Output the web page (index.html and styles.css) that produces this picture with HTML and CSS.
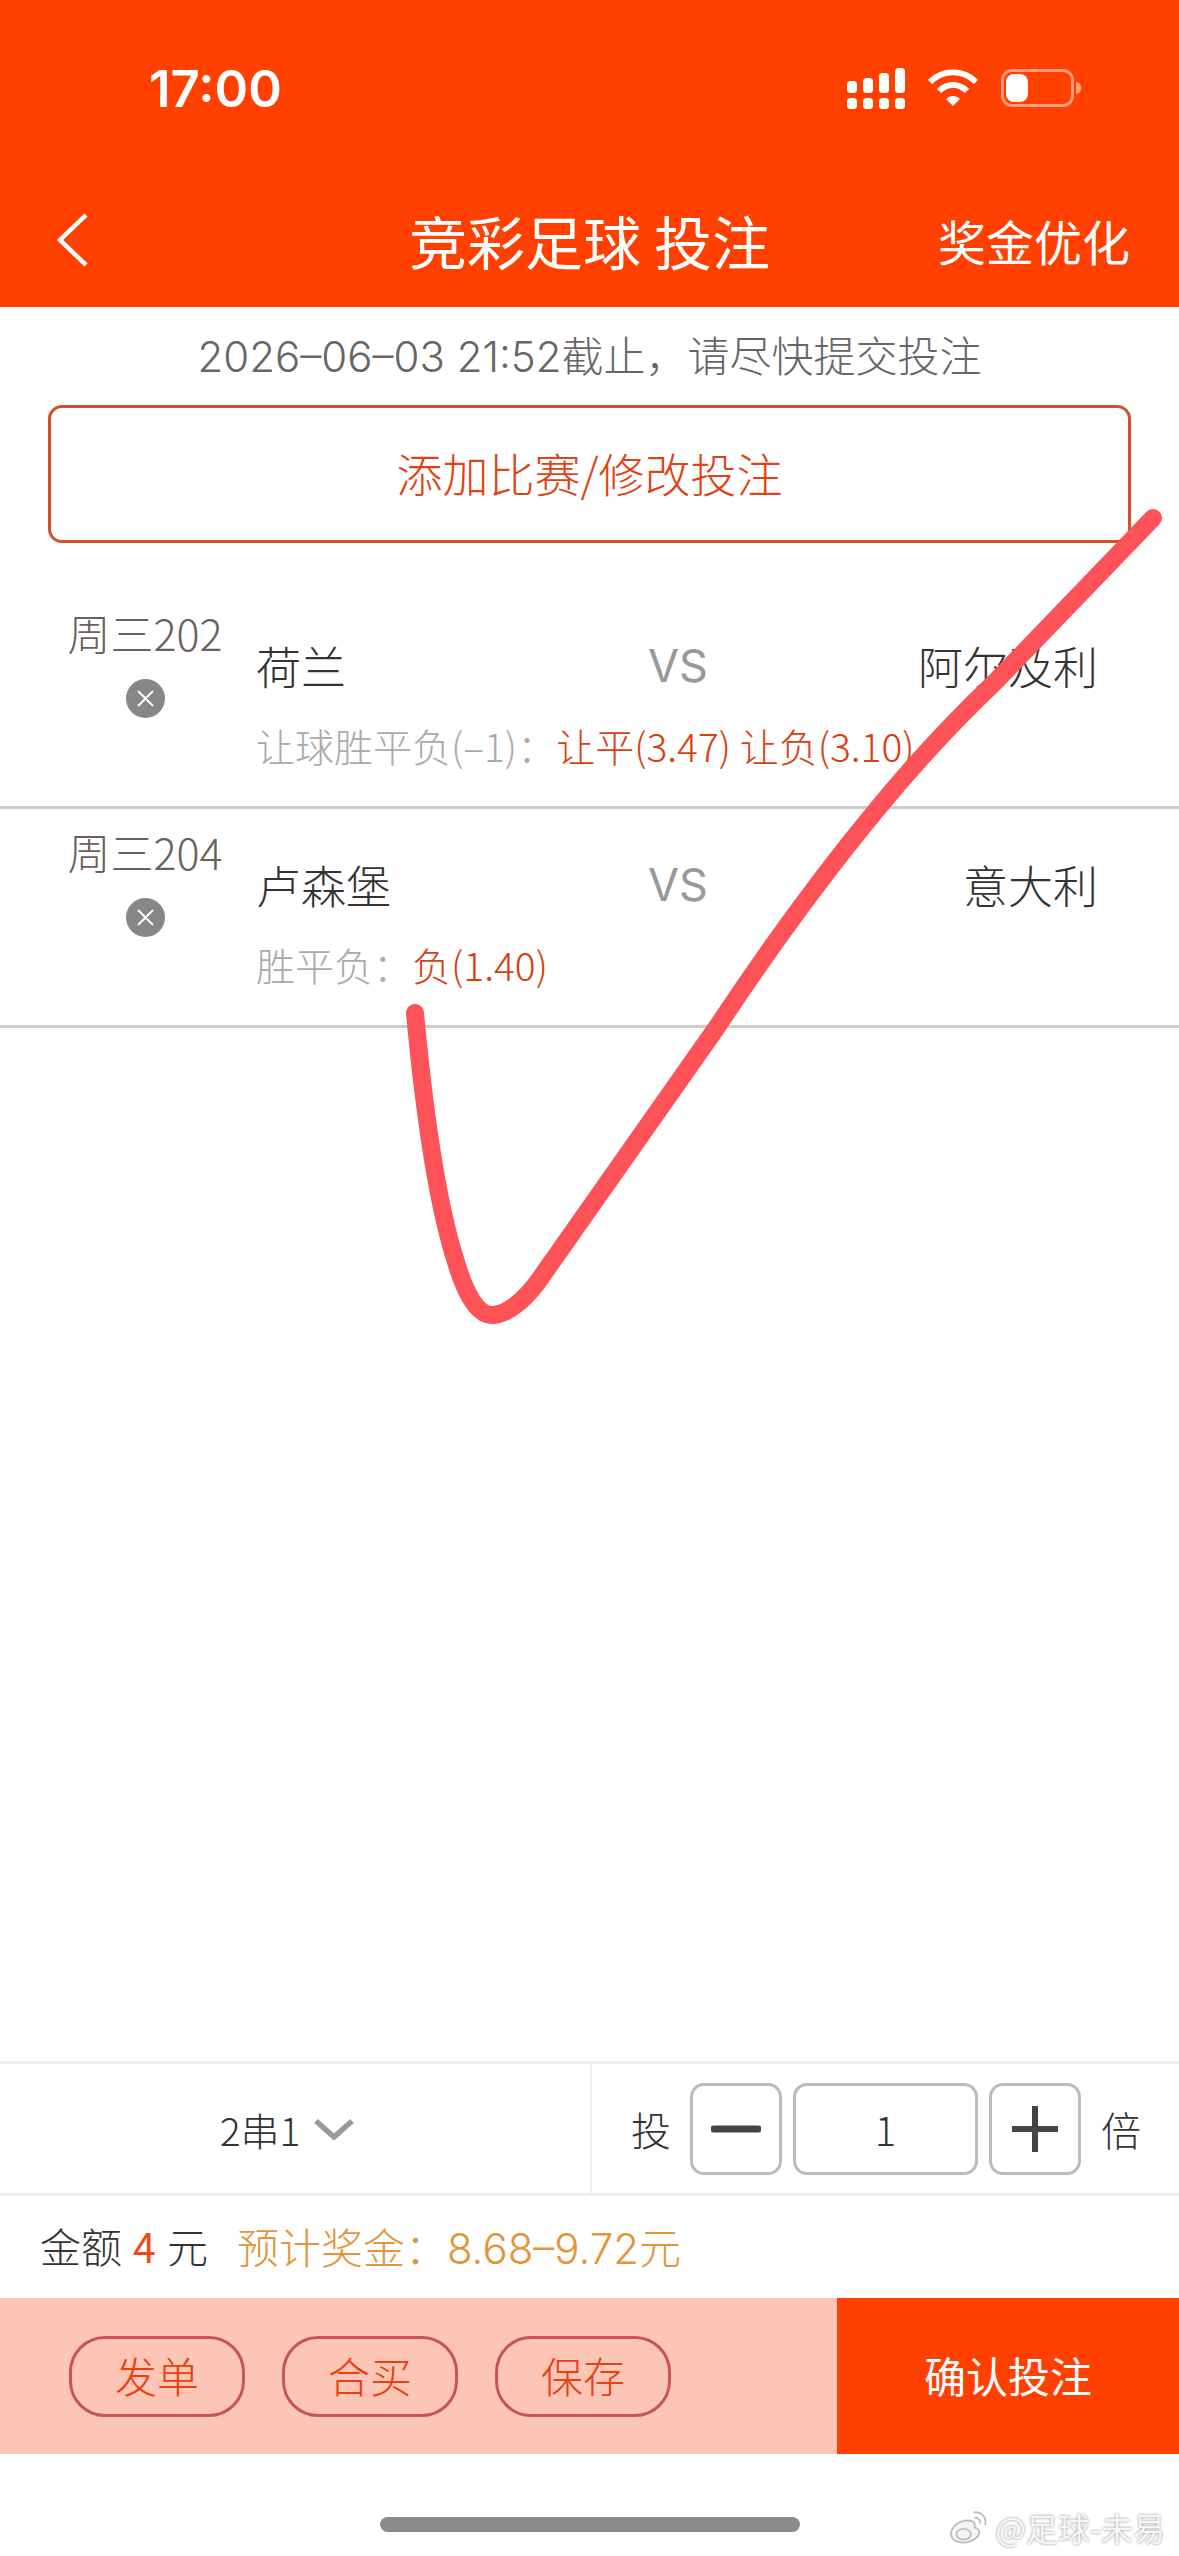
FILE: index.html
```html
<!DOCTYPE html>
<html lang="zh-CN">
<head>
    <meta charset="UTF-8">
    <meta name="viewport" content="width=device-width, initial-scale=1.0">
    <title>竞彩足球 投注</title>
    <link rel="stylesheet" href="styles.css">
</head>
<body>
    <div class="page">
        <!-- Header -->
        <header class="header">
            <div class="status-bar">
                <span class="time">17:00</span>
                <div class="status-icons">
                    <svg width="58" height="41" viewBox="0 0 58 41" fill="#fff">
                        <rect x="0" y="13" width="10" height="12" rx="3.5"/>
                        <rect x="16" y="10" width="10" height="15" rx="3.5"/>
                        <rect x="32" y="5" width="10" height="20" rx="3.5"/>
                        <rect x="48" y="0" width="10" height="25" rx="3.5"/>
                        <rect x="0" y="30" width="10" height="11" rx="3.5"/>
                        <rect x="16" y="30" width="10" height="11" rx="3.5"/>
                        <rect x="32" y="30" width="10" height="11" rx="3.5"/>
                        <rect x="48" y="30" width="10" height="11" rx="3.5"/>
                    </svg>
                    <svg class="wifi" width="50" height="38" viewBox="0 0 50 38" fill="none" stroke="#fff" stroke-width="6">
                        <path d="M2 13 C15 0 35 0 48 13"/>
                        <path d="M11 22 C19 14 31 14 39 22"/>
                        <path d="M18 30 L25 37 L32 30 C28 26 22 26 18 30 Z" fill="#fff" stroke="none"/>
                    </svg>
                    <div class="battery">
                        <div class="battery-level"></div>
                    </div>
                    <div class="battery-cap"></div>
                </div>
            </div>
            <div class="nav-bar">
                <svg class="back" width="34" height="54" viewBox="0 0 34 54" fill="none" stroke="#fff" stroke-width="4.5">
                    <path d="M30 2 L4 27 L30 52"/>
                </svg>
                <h1 class="nav-title">竞彩足球 投注</h1>
                <span class="nav-action">奖金优化</span>
            </div>
        </header>

        <div class="deadline">2026–06–03 21:52截止，请尽快提交投注</div>
        <div class="add-match">添加比赛/修改投注</div>

        <!-- Selected matches -->
        <section class="matches">
            <div class="match">
                <div class="match-no">
                    <span>周三202</span>
                    <svg class="remove" width="39" height="39" viewBox="0 0 39 39">
                        <circle cx="19.5" cy="19.5" r="19.5" fill="#878787"/>
                        <path d="M12 12 L27 27 M27 12 L12 27" stroke="#fff" stroke-width="2"/>
                    </svg>
                </div>
                <div class="match-info">
                    <div class="teams">
                        <span class="team">荷兰</span>
                        <span class="vs">VS</span>
                        <span class="team team-away">阿尔及利</span>
                    </div>
                    <div class="pick">
                        <span class="pick-label">让球胜平负(–1)：</span><span class="pick-odds">让平(3.47) 让负(3.10)</span>
                    </div>
                </div>
            </div>
            <div class="match">
                <div class="match-no">
                    <span>周三204</span>
                    <svg class="remove" width="39" height="39" viewBox="0 0 39 39">
                        <circle cx="19.5" cy="19.5" r="19.5" fill="#878787"/>
                        <path d="M12 12 L27 27 M27 12 L12 27" stroke="#fff" stroke-width="2"/>
                    </svg>
                </div>
                <div class="match-info">
                    <div class="teams">
                        <span class="team">卢森堡</span>
                        <span class="vs">VS</span>
                        <span class="team team-away">意大利</span>
                    </div>
                    <div class="pick">
                        <span class="pick-label">胜平负：</span><span class="pick-odds">负(1.40)</span>
                    </div>
                </div>
            </div>
        </section>

        <!-- Bottom controls -->
        <footer class="footer">
            <div class="bet-row">
                <div class="parlay">
                    <span>2串1</span>
                    <svg width="40" height="22" viewBox="0 0 40 22" fill="none" stroke="#999" stroke-width="5.5">
                        <path d="M2 3 L20 19 L38 3"/>
                    </svg>
                </div>
                <div class="multiple">
                    <span>投</span>
                    <div class="step">
                        <svg width="50" height="50" viewBox="0 0 50 50"><path d="M3 25 H47" stroke="#444" stroke-width="7" stroke-linecap="round"/></svg>
                    </div>
                    <div class="step step-value">1</div>
                    <div class="step">
                        <svg width="46" height="46" viewBox="0 0 46 46"><path d="M1 23 H45 M23 1 V45" stroke="#444" stroke-width="6" stroke-linecap="round"/></svg>
                    </div>
                    <span>倍</span>
                </div>
            </div>
            <div class="amount-row">
                <span class="amount-total">金额 <em class="amount">4</em> 元</span>
                <span class="bonus">预计奖金：8.68–9.72元</span>
            </div>
            <div class="action-bar">
                <div class="pills">
                    <span class="pill">发单</span>
                    <span class="pill">合买</span>
                    <span class="pill">保存</span>
                </div>
                <div class="confirm">确认投注</div>
            </div>
            <div class="home-area">
                <div class="home-indicator"></div>
            </div>
        </footer>

        <!-- Hand-drawn tick on top of the page -->
        <svg class="tick" width="1179" height="2556" viewBox="0 0 1179 2556" fill="none">
            <path d="M415 1013 C424 1110 436 1200 456 1262 C466 1296 478 1315 492 1315 C507 1315 524 1300 537 1283 C597 1198 657 1112 717 1027 C770 947 820 878 878 808 C915 763 955 720 997 680 C1045 630 1105 568 1153 518" stroke="#fd5358" stroke-width="18" stroke-linecap="round" stroke-linejoin="round"/>
        </svg>

        <!-- Watermark -->
        <div class="watermark">
            <svg width="42" height="36" viewBox="0 0 46 40" fill="#f4f4f4" stroke="#bdbdbd" stroke-width="2">
                <path d="M18 13 C8 15 2 23 3 29 C5 37 16 39 24 36 C32 33 36 28 34 24 C33 21 30 21 29 20 C31 15 27 12 18 13 Z"/>
                <ellipse cx="17" cy="28" rx="8" ry="6"/>
                <path d="M28 4 C36 2 43 9 41 18 M29 10 C33 9 36 12 35 16" fill="none"/>
            </svg>
            <span>@足球-未易</span>
        </div>
    </div>
</body>
</html>
```

FILE: styles.css
```css
* {
    box-sizing: border-box;
}

body {
    margin: 0;
    padding: 0;
    background-color: #fff;
    font-family: "Noto Sans CJK SC", "Noto Sans", sans-serif;
}

.page {
    position: relative;
    width: 1179px;
    height: 2556px;
    display: flex;
    flex-direction: column;
    overflow: hidden;
    background-color: #fff;
}

/* header */
.header {
    height: 307px;
    background-color: #ff4000;
    color: #fff;
    flex-shrink: 0;
}

.status-bar {
    height: 176px;
    padding: 0 98px 0 149px;
    display: flex;
    justify-content: space-between;
    align-items: center;
}

.time {
    font-family: Inter, sans-serif;
    font-size: 51px;
    font-weight: 600;
}

.status-icons {
    display: flex;
    align-items: center;
}

.wifi {
    margin-left: 23px;
}

.battery {
    width: 73px;
    height: 38px;
    margin-left: 23px;
    padding: 2px;
    border: 3px solid #ff9c7c;
    border-radius: 11px;
}

.battery-level {
    width: 22px;
    height: 28px;
    background-color: #fff;
    border-radius: 8px;
}

.battery-cap {
    width: 5px;
    height: 12px;
    margin-left: 2px;
    background-color: #ff9c7c;
    border-radius: 0 5px 5px 0;
}

.nav-bar {
    height: 131px;
    position: relative;
    padding: 0 49px 4px 56px;
    display: flex;
    align-items: center;
    justify-content: space-between;
}

.nav-title {
    position: absolute;
    left: 0;
    right: 0;
    margin: 0;
    text-align: center;
    font-size: 58px;
    font-weight: 400;
}

.nav-action {
    font-size: 48px;
}

/* deadline + add button */
.deadline {
    height: 98px;
    line-height: 100px;
    text-align: center;
    font-family: Inter, "Noto Sans CJK SC", sans-serif;
    font-size: 42px;
    font-weight: 300;
    color: #666;
    flex-shrink: 0;
}

.add-match {
    height: 138px;
    margin: 0 48px;
    border: 3px solid #d4502a;
    border-radius: 14px;
    line-height: 128px;
    text-align: center;
    font-size: 46px;
    font-weight: 300;
    color: #df4315;
    flex-shrink: 0;
}

/* match rows */
.matches {
    padding-top: 47px;
    flex: 1;
}

.match {
    height: 219px;
    display: flex;
    border-bottom: 3px solid #ccc;
}

.match-no {
    width: 256px;
    padding: 12px 32px 0 66px;
    display: flex;
    flex-direction: column;
    align-items: center;
    font-size: 43px;
    font-weight: 300;
    line-height: 60px;
    white-space: nowrap;
    color: #6b6060;
}

.remove {
    margin-top: 17px;
}

.match-info {
    flex: 1;
    padding-right: 81px;
}

.teams {
    position: relative;
    display: flex;
    justify-content: space-between;
    padding-top: 46px;
    font-size: 45px;
    font-weight: 300;
    line-height: 60px;
    color: #333;
}

.vs {
    position: absolute;
    left: 390px;
    width: 64px;
    text-align: center;
    color: #999;
    font-family: Inter, sans-serif;
    font-weight: 400;
}

.pick {
    margin-top: 21px;
    font-size: 39px;
    font-weight: 300;
    line-height: 56px;
    white-space: nowrap;
}

.pick-label {
    color: #aaa;
}

.pick-odds {
    color: #d9400f;
}

/* footer */
.footer {
    flex-shrink: 0;
}

.bet-row {
    height: 135px;
    display: flex;
    border-top: 3px solid #eee;
    border-bottom: 3px solid #eee;
}

.parlay {
    width: 592px;
    padding-right: 16px;
    border-right: 2px solid #eee;
    display: flex;
    align-items: center;
    justify-content: center;
    gap: 14px;
    font-size: 39px;
    font-weight: 300;
    color: #333;
}

.multiple {
    flex: 1;
    padding-left: 39px;
    display: flex;
    align-items: center;
    font-size: 40px;
    font-weight: 300;
    color: #333;
}

.step {
    width: 92px;
    height: 92px;
    margin-left: 11px;
    border: 3px solid #bbb;
    border-radius: 14px;
    display: flex;
    align-items: center;
    justify-content: center;
}

.multiple span:first-child {
    margin-right: 8px;
}

.multiple span:last-child {
    margin-left: 20px;
}

.step-value {
    width: 185px;
}

.amount-row {
    height: 102px;
    padding: 0 0 4px 40px;
    display: flex;
    align-items: center;
    gap: 29px;
    font-size: 41px;
    font-weight: 300;
    color: #333;
}

.amount-total {
    word-spacing: 2px;
}

.amount {
    font-style: normal;
    font-weight: 400;
    color: #ef4a18;
}

.bonus {
    font-family: Inter, "Noto Sans CJK SC", sans-serif;
    font-size: 42px;
    color: #e2953a;
}

.action-bar {
    height: 156px;
    display: flex;
    background-color: #fdc5b5;
}

.pills {
    flex: 1;
    padding-left: 69px;
    display: flex;
    align-items: center;
    gap: 37px;
}

.pill {
    width: 176px;
    height: 81px;
    padding-bottom: 4px;
    border: 3px solid #c9525c;
    border-radius: 36px;
    display: flex;
    align-items: center;
    justify-content: center;
    font-size: 42px;
    font-weight: 300;
    color: #e8400e;
}

.confirm {
    width: 342px;
    padding-bottom: 4px;
    background-color: #ff4000;
    color: #fff;
    font-size: 42px;
    font-weight: 400;
    display: flex;
    align-items: center;
    justify-content: center;
}

.home-area {
    height: 102px;
    padding-top: 63px;
}

.home-indicator {
    width: 420px;
    height: 15px;
    margin: 0 auto;
    background-color: #8c8c8c;
    border-radius: 8px;
}

/* overlays */
.tick {
    position: absolute;
    left: 0;
    top: 0;
}

.watermark {
    position: absolute;
    right: 14px;
    bottom: 6px;
    display: flex;
    align-items: center;
    gap: 6px;
    font-size: 32px;
    color: #f6f6f6;
    text-shadow: 0 0 3px #8a8a8a;
}
```
